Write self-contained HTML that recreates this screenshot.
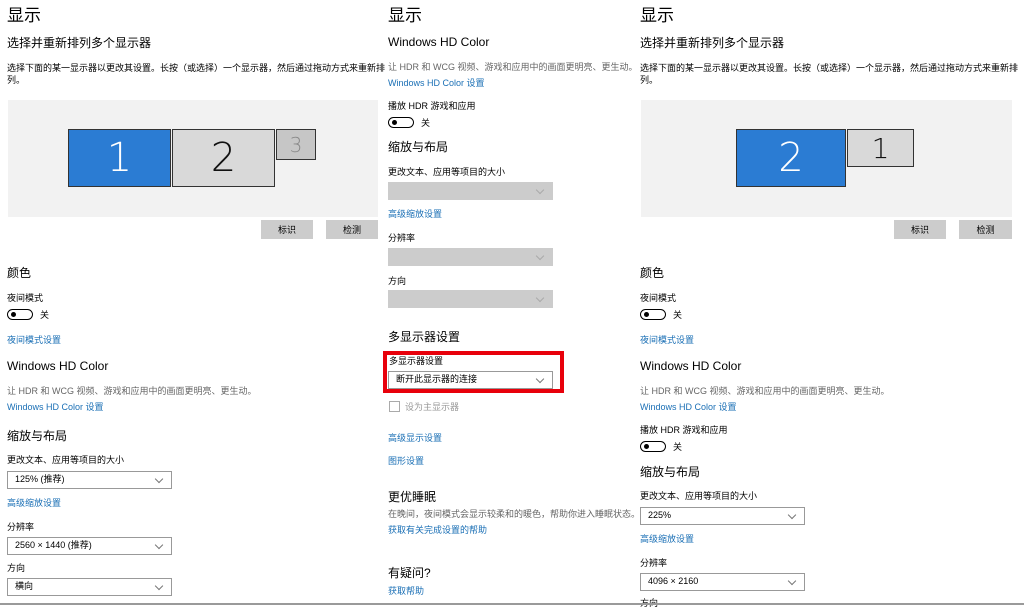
<!DOCTYPE html>
<html><head><meta charset="utf-8"><style>
*{margin:0;padding:0;box-sizing:border-box}
body{width:1024px;height:605px;background:#fff;position:relative;overflow:hidden;font-family:"Liberation Sans","Noto Sans CJK SC",sans-serif;color:#000}
.t{position:absolute;white-space:nowrap;line-height:1}
.h1{font-size:17px;margin-top:1px}
.h2{font-size:12px;margin-top:1px}
.s{font-size:9px;margin-top:2px}
.g{color:#666}
.l{color:#1a6fb5;font-size:9px;margin-top:2px}
.box{position:absolute;background:#f2f2f2}
.mon{position:absolute;border:1.5px solid #333;display:flex;align-items:center;justify-content:center;font-family:"DejaVu Sans",sans-serif;font-weight:200}
.btn{position:absolute;background:#cccccc;font-size:9px;display:flex;align-items:center;justify-content:center;height:19px;width:52px}
.tg{position:absolute;width:26px;height:11px;border:1.5px solid #000;border-radius:6px}
.tg:after{content:"";position:absolute;left:3px;top:2px;width:5px;height:5px;border-radius:50%;background:#000}
.sel{position:absolute;height:18px;border:1.5px solid #999;background:#fff;font-size:9px;padding-left:7px;line-height:15px}
.sel:after{content:"";position:absolute;right:9px;top:4px;width:5px;height:5px;border-right:1px solid #777;border-bottom:1px solid #777;transform:rotate(45deg)}
.dis{background:#cccccc;border-color:#cccccc}
.dis:after{border-color:#aaa}
</style></head><body>

<!-- LEFT -->
<div class="t h1" style="left:7px;top:6px">显示</div>
<div class="t h2" style="left:7px;top:36px">选择并重新排列多个显示器</div>
<div class="t s" style="left:7px;top:62px">选择下面的某一显示器以更改其设置。长按（或选择）一个显示器，然后通过拖动方式来重新排</div>
<div class="t s" style="left:7px;top:74px">列。</div>
<div class="box" style="left:8px;top:100px;width:370px;height:117px"></div>
<div class="mon" style="left:68px;top:129px;width:103px;height:58px;background:#2b7cd3;color:#fff;font-size:40px">1</div>
<div class="mon" style="left:172px;top:129px;width:103px;height:58px;background:#d9d9d9;color:#111;font-size:40px">2</div>
<div class="mon" style="left:276px;top:129px;width:40px;height:31px;background:#c6c6c6;color:#888;font-size:20px">3</div>
<div class="btn" style="left:261px;top:220px">标识</div>
<div class="btn" style="left:326px;top:220px">检测</div>
<div class="t h2" style="left:7px;top:266px">颜色</div>
<div class="t s" style="left:7px;top:292px">夜间模式</div>
<div class="tg" style="left:7px;top:309px"></div>
<div class="t s" style="left:40px;top:309px">关</div>
<div class="t l" style="left:7px;top:334px">夜间模式设置</div>
<div class="t h2" style="left:7px;top:359px">Windows HD Color</div>
<div class="t s g" style="left:7px;top:385px">让 HDR 和 WCG 视频、游戏和应用中的画面更明亮、更生动。</div>
<div class="t l" style="left:7px;top:401px">Windows HD Color 设置</div>
<div class="t h2" style="left:7px;top:429px">缩放与布局</div>
<div class="t s" style="left:7px;top:454px">更改文本、应用等项目的大小</div>
<div class="sel" style="left:7px;top:471px;width:165px">125% (推荐)</div>
<div class="t l" style="left:7px;top:497px">高级缩放设置</div>
<div class="t s" style="left:7px;top:521px">分辨率</div>
<div class="sel" style="left:7px;top:537px;width:165px">2560 × 1440 (推荐)</div>
<div class="t s" style="left:7px;top:562px">方向</div>
<div class="sel" style="left:7px;top:578px;width:165px">横向</div>

<!-- MIDDLE -->
<div class="t h1" style="left:388px;top:6px">显示</div>
<div class="t h2" style="left:388px;top:35px">Windows HD Color</div>
<div class="t s g" style="left:388px;top:61px">让 HDR 和 WCG 视频、游戏和应用中的画面更明亮、更生动。</div>
<div class="t l" style="left:388px;top:77px">Windows HD Color 设置</div>
<div class="t s" style="left:388px;top:100px">播放 HDR 游戏和应用</div>
<div class="tg" style="left:388px;top:117px"></div>
<div class="t s" style="left:421px;top:117px">关</div>
<div class="t h2" style="left:388px;top:140px">缩放与布局</div>
<div class="t s" style="left:388px;top:166px">更改文本、应用等项目的大小</div>
<div class="sel dis" style="left:388px;top:182px;width:165px"></div>
<div class="t l" style="left:388px;top:208px">高级缩放设置</div>
<div class="t s" style="left:388px;top:232px">分辨率</div>
<div class="sel dis" style="left:388px;top:248px;width:165px"></div>
<div class="t s" style="left:388px;top:275px">方向</div>
<div class="sel dis" style="left:388px;top:290px;width:165px"></div>
<div class="t h2" style="left:388px;top:330px">多显示器设置</div>
<div style="position:absolute;left:383px;top:351px;width:181px;height:42px;border:4px solid #e8000b"></div>
<div class="t s" style="left:389px;top:355px">多显示器设置</div>
<div class="sel" style="left:388px;top:371px;width:165px;height:18px">断开此显示器的连接</div>
<div style="position:absolute;left:389px;top:401px;width:11px;height:11px;border:1px solid #aaa"></div>
<div class="t s" style="left:405px;top:401px;color:#999">设为主显示器</div>
<div class="t l" style="left:388px;top:432px">高级显示设置</div>
<div class="t l" style="left:388px;top:455px">图形设置</div>
<div class="t h2" style="left:388px;top:490px">更优睡眠</div>
<div class="t s g" style="left:388px;top:508px">在晚间，夜间模式会显示较柔和的暖色，帮助你进入睡眠状态。</div>
<div class="t l" style="left:388px;top:524px">获取有关完成设置的帮助</div>
<div class="t h2" style="left:388px;top:566px">有疑问?</div>
<div class="t l" style="left:388px;top:585px">获取帮助</div>

<!-- RIGHT -->
<div class="t h1" style="left:640px;top:6px">显示</div>
<div class="t h2" style="left:640px;top:36px">选择并重新排列多个显示器</div>
<div class="t s" style="left:640px;top:62px">选择下面的某一显示器以更改其设置。长按（或选择）一个显示器，然后通过拖动方式来重新排</div>
<div class="t s" style="left:640px;top:74px">列。</div>
<div class="box" style="left:641px;top:100px;width:371px;height:117px"></div>
<div class="mon" style="left:736px;top:129px;width:110px;height:58px;background:#2b7cd3;color:#fff;font-size:40px">2</div>
<div class="mon" style="left:847px;top:129px;width:67px;height:38px;background:#d9d9d9;color:#111;font-size:28px">1</div>
<div class="btn" style="left:894px;top:220px">标识</div>
<div class="btn" style="left:959px;top:220px;width:53px">检测</div>
<div class="t h2" style="left:640px;top:266px">颜色</div>
<div class="t s" style="left:640px;top:292px">夜间模式</div>
<div class="tg" style="left:640px;top:309px"></div>
<div class="t s" style="left:673px;top:309px">关</div>
<div class="t l" style="left:640px;top:334px">夜间模式设置</div>
<div class="t h2" style="left:640px;top:359px">Windows HD Color</div>
<div class="t s g" style="left:640px;top:385px">让 HDR 和 WCG 视频、游戏和应用中的画面更明亮、更生动。</div>
<div class="t l" style="left:640px;top:401px">Windows HD Color 设置</div>
<div class="t s" style="left:640px;top:424px">播放 HDR 游戏和应用</div>
<div class="tg" style="left:640px;top:441px"></div>
<div class="t s" style="left:673px;top:441px">关</div>
<div class="t h2" style="left:640px;top:465px">缩放与布局</div>
<div class="t s" style="left:640px;top:490px">更改文本、应用等项目的大小</div>
<div class="sel" style="left:640px;top:507px;width:165px">225%</div>
<div class="t l" style="left:640px;top:533px">高级缩放设置</div>
<div class="t s" style="left:640px;top:557px">分辨率</div>
<div class="sel" style="left:640px;top:573px;width:165px">4096 × 2160</div>
<div class="t s" style="left:640px;top:597px">方向</div>

<div style="position:absolute;left:0;top:603px;width:1024px;height:2px;background:#9a9a9a"></div>
</body></html>
